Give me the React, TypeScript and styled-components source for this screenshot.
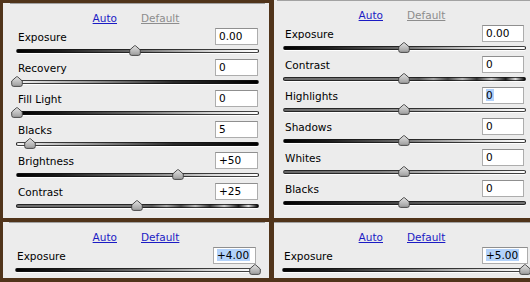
import React from 'react';
import styled, { createGlobalStyle } from 'styled-components';

const GlobalStyle = createGlobalStyle`
  html, body {
    margin: 0;
    padding: 0;
    background: #50341a;
  }
  body {
    font-family: 'DejaVu Sans', 'Liberation Sans', sans-serif;
  }
`;

const Frame = styled.div`
  width: 530px;
  height: 282px;
  box-sizing: border-box;
  padding-left: 3px;
  background: #50341a;
  display: grid;
  grid-template-columns: 266px 256px;
  grid-template-rows: 218px 56px;
  column-gap: 5px;
  row-gap: 4px;
  overflow: hidden;
`;

const Panel = styled.section<{ $top: number }>`
  margin-top: ${(p) => p.$top}px;
  background: #ececec;
  display: flex;
  flex-direction: column;
  overflow: hidden;
`;

const Rule = styled.div<{ $m: string }>`
  height: 1px;
  flex: none;
  margin: ${(p) => p.$m};
  background: #a2a2a2;
`;

const Header = styled.div`
  height: 24px;
  flex: none;
  box-sizing: border-box;
  padding-top: 4px;
  display: flex;
  justify-content: center;
  gap: 24px;
  font-size: 10.5px;
  line-height: 20px;
`;

const Link = styled.span<{ $muted?: boolean }>`
  color: ${(p) => (p.$muted ? '#8d8d8d' : '#1b1bc4')};
  text-decoration: underline;
`;

const Body = styled.div<{ $l: number; $r: number }>`
  padding: 0 ${(p) => p.$r}px 0 ${(p) => p.$l}px;
  display: flex;
  flex-direction: column;
`;

const Line = styled.div<{ $inset: number }>`
  height: 17px;
  display: flex;
  align-items: center;
  justify-content: space-between;
  padding-left: 2px;
  margin-right: ${(p) => p.$inset}px;
`;

const Label = styled.span`
  font-size: 10.5px;
  color: #000;
`;

const Field = styled.div<{ $w: number }>`
  width: ${(p) => p.$w}px;
  height: 17px;
  box-sizing: border-box;
  background: #fff;
  border: 1px solid #adadad;
  border-top-color: #8f8f8f;
  padding-left: 3px;
  font-size: 10.5px;
  line-height: 15px;
  color: #000;
  white-space: nowrap;
`;

const Selected = styled.span`
  background: #b3d2fa;
  padding: 0 1px 0 0;
`;

const SliderArea = styled.div`
  position: relative;
  height: 14px;
`;

const Track = styled.div<{ $bg: string }>`
  margin-top: 4px;
  height: 4px;
  box-sizing: border-box;
  border-radius: 2px;
  border: 1px solid rgba(20, 20, 20, 0.8);
  background: ${(p) => p.$bg};
  box-shadow: 0 1px 0 rgba(255, 255, 255, 0.95);
`;

const ThumbBox = styled.svg`
  position: absolute;
  top: 0;
  width: 12px;
  height: 11px;
`;

const bw = 'linear-gradient(90deg, #000 0%, #1c1c1c 18%, #707070 50%, #d6d6d6 80%, #fff 100%)';
const wb = 'linear-gradient(90deg, #f2f2f2 0%, #9a9a9a 30%, #2a2a2a 65%, #000 100%)';
const gw = 'linear-gradient(90deg, #666 0%, #858585 40%, #d8d8d8 80%, #fff 100%)';
const bg = 'linear-gradient(90deg, #000 0%, #2e2e2e 30%, #5c5c5c 60%, #727272 100%)';
const stripes =
  'linear-gradient(90deg, #6c6c6c 0%, #767676 48%, #5a5a5a 56%, #a6a6a6 62%, #474747 68%, #b8b8b8 74%, #363636 80%, #cacaca 86%, #1e1e1e 92%, #dedede 96%, #000 100%)';

type Row = { label: string; value: string; pos: number; track: string; sel?: boolean };

type Config = {
  top: number;
  rule: string;
  l: number;
  r: number;
  field: number;
  inset: number;
  muted: boolean;
  rows: Row[];
};

const panels: Config[] = [
  {
    top: 3,
    rule: '0 4px 0 7px',
    l: 13,
    r: 10,
    field: 43,
    inset: 1,
    muted: true,
    rows: [
      { label: 'Exposure', value: '0.00', pos: 0.49, track: bw },
      { label: 'Recovery', value: '0', pos: 0.004, track: wb },
      { label: 'Fill Light', value: '0', pos: 0.004, track: bw },
      { label: 'Blacks', value: '5', pos: 0.058, track: wb },
      { label: 'Brightness', value: '+50', pos: 0.667, track: bw },
      { label: 'Contrast', value: '+25', pos: 0.498, track: stripes },
    ],
  },
  {
    top: 0,
    rule: '0 0 0 3px',
    l: 9,
    r: 4,
    field: 42,
    inset: 2,
    muted: true,
    rows: [
      { label: 'Exposure', value: '0.00', pos: 0.498, track: bw },
      { label: 'Contrast', value: '0', pos: 0.498, track: stripes },
      { label: 'Highlights', value: '0', pos: 0.498, track: gw, sel: true },
      { label: 'Shadows', value: '0', pos: 0.498, track: bw },
      { label: 'Whites', value: '0', pos: 0.498, track: gw },
      { label: 'Blacks', value: '0', pos: 0.498, track: bg },
    ],
  },
  {
    top: 0,
    rule: '0 4px 0 6px',
    l: 12,
    r: 12,
    field: 43,
    inset: 1,
    muted: false,
    rows: [{ label: 'Exposure', value: '+4.00', pos: 0.99, track: bw, sel: true }],
  },
  {
    top: 0,
    rule: '0',
    l: 8,
    r: 3,
    field: 46,
    inset: -1,
    muted: false,
    rows: [{ label: 'Exposure', value: '+5.00', pos: 0.99, track: bw, sel: true }],
  },
];

const Thumb: React.FC<{ pos: number }> = ({ pos }) => (
  <ThumbBox viewBox="0 0 12 11" style={{ left: `calc(${pos * 100}% - 6px)` }}>
    <defs>
      <linearGradient id="thumbFill" x1="0" y1="0" x2="0" y2="1">
        <stop offset="0" stopColor="#e2e2e2" />
        <stop offset="1" stopColor="#9c9c9c" />
      </linearGradient>
    </defs>
    <path
      d="M5.3 0.9 Q6 0.3 6.7 0.9 L11.3 5 L11.3 8.4 Q11.3 10.4 9.3 10.4 L2.7 10.4 Q0.7 10.4 0.7 8.4 L0.7 5 Z"
      fill="url(#thumbFill)"
      stroke="#3c3c3c"
      strokeWidth="0.9"
    />
  </ThumbBox>
);

const SliderRow: React.FC<{ row: Row; field: number; inset: number }> = ({ row, field, inset }) => (
  <>
    <Line $inset={inset}>
      <Label>{row.label}</Label>
      <Field $w={field}>{row.sel ? <Selected>{row.value}</Selected> : row.value}</Field>
    </Line>
    <SliderArea>
      <Track $bg={row.track} />
      <Thumb pos={row.pos} />
    </SliderArea>
  </>
);

const App: React.FC = () => (
  <>
    <GlobalStyle />
    <Frame>
      {panels.map((p, i) => (
        <Panel key={i} $top={p.top}>
          <Rule $m={p.rule} />
          <Header>
            <Link>Auto</Link>
            <Link $muted={p.muted}>Default</Link>
          </Header>
          <Body $l={p.l} $r={p.r}>
            {p.rows.map((row) => (
              <SliderRow key={row.label} row={row} field={p.field} inset={p.inset} />
            ))}
          </Body>
        </Panel>
      ))}
    </Frame>
  </>
);

export default App;
